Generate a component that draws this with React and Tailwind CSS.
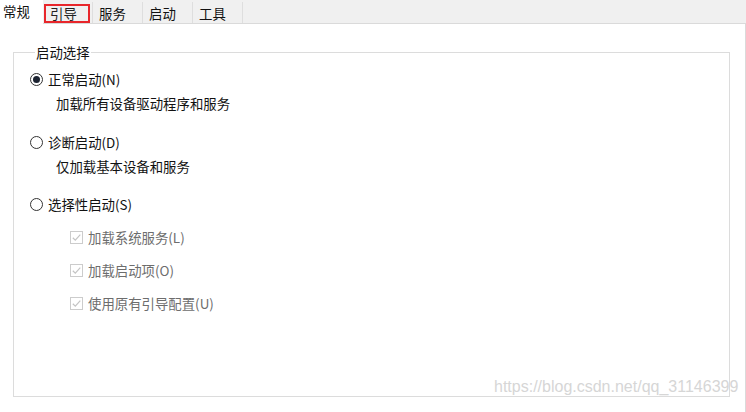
import React from "react";

const font = { fontFamily: '"Noto Sans CJK SC", "Noto Sans", sans-serif' };

function Radio({ checked }) {
  return (
    <svg width="13" height="13" viewBox="0 0 13 13" className="shrink-0">
      <circle cx="6.5" cy="6.5" r="6" fill="#fff" stroke="#333" strokeWidth="1" />
      {checked && <circle cx="6.5" cy="6.5" r="3.5" fill="#1c2331" />}
    </svg>
  );
}

function Check() {
  return (
    <svg width="13" height="13" viewBox="0 0 13 13" className="shrink-0">
      <rect x="0.5" y="0.5" width="12" height="12" fill="#fff" stroke="#cccccc" />
      <path d="M2.8 6.8 L5.3 9.2 L10.3 3.6" fill="none" stroke="#c4c4c4" strokeWidth="1.2" />
    </svg>
  );
}

export default function App() {
  const tabs = [
    { t: "引导", box: true },
    { t: "服务" },
    { t: "启动" },
    { t: "工具" },
  ];
  return (
    <div
      className="relative w-[746px] h-[412px] bg-white overflow-hidden text-[13.4px] text-[#111]"
      style={font}
    >
      <div className="flex h-[24px] bg-[#f0f0f0] border-b border-[#dadada]">
        <div className="w-[43px] h-[24px] bg-white -mb-px pl-[3px] leading-[22px]">常规</div>
        <div className="flex pt-[2px]">
          {tabs.map((x, i) => (
            <div
              key={i}
              className={
                "h-[21px] border-r border-[#dedede] flex items-start " +
                (i === 0 ? "w-[50px] pl-[1px]" : "w-[50px] pl-[6px]")
              }
            >
              {x.box ? (
                <div className="w-[46px] h-[19px] border-2 border-[#e8262b] pl-[4px] leading-[15px] mt-[2px] text-[#222]">
                  {x.t}
                </div>
              ) : (
                <div className="leading-[20px] mt-px">{x.t}</div>
              )}
            </div>
          ))}
        </div>
      </div>
      <div className="h-[388px] border-r border-[#dadada] pl-[13px] pt-[19px] w-[746px]">
        <fieldset className="w-[717px] h-[354px] border border-[#dcdcdc] pl-[16px] pt-[6px]">
          <legend className="ml-[5px] px-[1px] leading-[18px]">启动选择</legend>
          <div className="flex items-center h-[24px] gap-[5px]">
            <Radio checked />
            <span>正常启动(N)</span>
          </div>
          <div className="h-[24px] leading-[24px] pl-[26px]">加载所有设备驱动程序和服务</div>
          <div className="flex items-center h-[24px] gap-[5px] mt-[15px]">
            <Radio />
            <span>诊断启动(D)</span>
          </div>
          <div className="h-[24px] leading-[24px] pl-[26px]">仅加载基本设备和服务</div>
          <div className="flex items-center h-[24px] gap-[5px] mt-[14px]">
            <Radio />
            <span>选择性启动(S)</span>
          </div>
          <div className="pl-[40px] text-[#6d6d6d]">
            <div className="flex items-center h-[24px] gap-[5px] mt-[9px]">
              <Check />
              <span>加载系统服务(L)</span>
            </div>
            <div className="flex items-center h-[24px] gap-[5px] mt-[9px]">
              <Check />
              <span>加载启动项(O)</span>
            </div>
            <div className="flex items-center h-[24px] gap-[5px] mt-[9px]">
              <Check />
              <span>使用原有引导配置(U)</span>
            </div>
          </div>
        </fieldset>
      </div>
      <div
        className="absolute left-[494px] top-[376px] text-[16px] leading-[22px] text-[#d6d6d6]"
        style={{ fontFamily: '"Liberation Sans", Arial, sans-serif' }}
      >
        https://blog.csdn.net/qq_31146399
      </div>
    </div>
  );
}
